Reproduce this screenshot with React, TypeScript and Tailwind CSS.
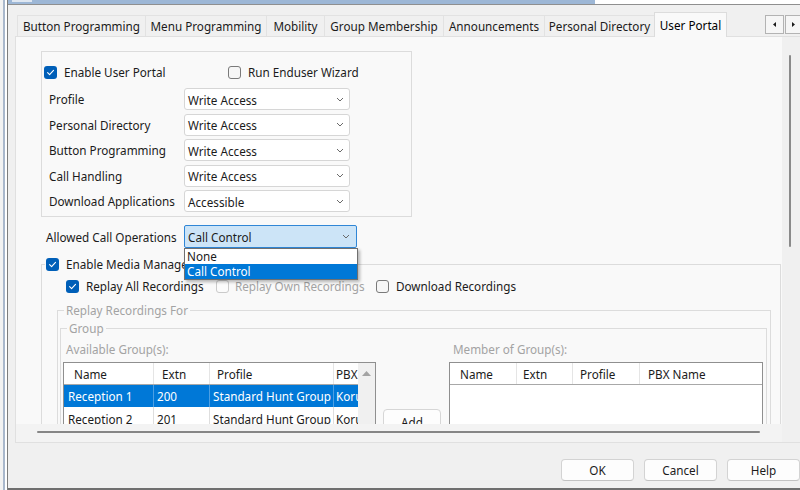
import React from "react";

function Check() {
  return (
    <svg width="9" height="9" viewBox="0 0 9 9">
      <path d="M1.6 4.7 L3.6 6.7 L7.5 2.3" fill="none" stroke="white" strokeWidth="1.1" strokeLinecap="round" strokeLinejoin="round" />
    </svg>
  );
}

function Checkbox({ checked, disabled }: { checked?: boolean; disabled?: boolean }) {
  if (checked)
    return (
      <div className="w-[13px] h-[13px] rounded-[3px] bg-[#005fb8] flex items-center justify-center shrink-0">
        <Check />
      </div>
    );
  return (
    <div
      className={
        disabled
          ? "w-[13px] h-[13px] rounded-[3px] border border-[#cacaca] bg-[#fbfbfb] shrink-0"
          : "w-[13px] h-[13px] rounded-[3px] border border-[#7a7a7a] bg-[#f6f6f6] shrink-0"
      }
    />
  );
}

function Chevron() {
  return (
    <svg width="8" height="5" viewBox="0 0 8 5">
      <path d="M1 1 L4 4 L7 1" fill="none" stroke="#6a6a6a" strokeWidth="1" />
    </svg>
  );
}

function Select({ value }: { value: string }) {
  return (
    <div className="h-[22px] w-[166px] border border-[#d6d6d6] rounded-[3px] bg-white flex items-center pl-[3px] pr-[5px]">
      <span className="flex-1 pt-[1px]">{value}</span>
      <Chevron />
    </div>
  );
}

const tabs: [string, string][] = [
  ["Button Programming", "w-[128px]"],
  ["Menu Programming", "w-[121px]"],
  ["Mobility", "w-[58px]"],
  ["Group Membership", "w-[119px]"],
  ["Announcements", "w-[101px]"],
  ["Personal Directory", "w-[110px]"],
];

const rows: [string, string][] = [
  ["Profile", "Write Access"],
  ["Personal Directory", "Write Access"],
  ["Button Programming", "Write Access"],
  ["Call Handling", "Write Access"],
  ["Download Applications", "Accessible"],
];

function Btn({ label }: { label: string }) {
  return (
    <div className="w-[73px] h-[22px] shrink-0 border border-[#d3d3d3] border-b-[#c2c2c2] rounded-[4px] bg-[#fdfdfd] flex items-center justify-center">
      {label}
    </div>
  );
}

export default function App() {
  return (
    <div className="w-[800px] h-[490px] flex overflow-hidden bg-[#f0f0f0] text-[11.7px] leading-[16px] text-[#1b1b1b] font-['Noto_Sans',sans-serif]">
      {/* left edge of window behind */}
      <div className="w-[8px] h-full flex shrink-0">
        <div className="w-[3px] bg-[#f2f2f2]" />
        <div className="w-[2px] bg-[#a9b8cc]" />
        <div className="w-[2px] bg-white" />
        <div className="w-[1px] bg-[#7d7d7d]" />
      </div>

      <div className="flex-1 flex flex-col min-w-0">
        <div className="h-[4px] flex shrink-0">
          <div className="w-[587px] bg-[#9db7d6] pl-[4px]">
            <div className="w-[20px] h-[2px] bg-[#dfe7f1]" />
          </div>
          <div className="flex-1 bg-white" />
        </div>
        <div className="h-[1px] bg-[#8f8f8f] shrink-0" />

        <div className="flex-1 flex flex-col border-b-2 border-[#6f6f6f] min-h-0">
          {/* tab strip */}
          <div className="mt-[7px] ml-[9px] h-[24px] flex items-end shrink-0">
            {tabs.map(([t, w]) => (
              <div
                key={t}
                className={`${w} h-[21px] shrink-0 border-t border-l border-[#e2e2e2] flex items-center justify-center whitespace-nowrap`}
              >
                {t}
              </div>
            ))}
            <div className="w-[73px] h-[25px] shrink-0 bg-[#f9f9f9] border-t border-l border-r border-[#dcdcdc] mb-[-1px] relative z-10 flex items-center justify-center whitespace-nowrap text-black pb-[1px]">
              User Portal
            </div>
            <div className="ml-auto mr-[-4px] self-start mt-[3px] flex gap-[1px]">
              <div className="w-[19px] h-[19px] border border-[#b3b3b3] bg-[#f6f6f6] flex items-center justify-center">
                <svg width="3" height="5" viewBox="0 0 3 5">
                  <path d="M3 0 L0 2.5 L3 5 Z" fill="#1b1b1b" />
                </svg>
              </div>
              <div className="w-[19px] h-[19px] border border-[#b3b3b3] bg-[#f6f6f6] flex items-center justify-center pr-[3px]">
                <svg width="3" height="5" viewBox="0 0 3 5">
                  <path d="M0 0 L3 2.5 L0 5 Z" fill="#1b1b1b" />
                </svg>
              </div>
            </div>
          </div>

          {/* tab panel */}
          <div className="ml-[7px] h-[407px] flex border-t border-l border-b border-[#e0e0e0] bg-[#f9f9f9] shrink-0">
            <div className="w-[766px] flex flex-col">
              <div className="h-[387px] overflow-hidden">
                <div className="pl-[25px] pt-[14px] flex flex-col items-start">
                  {/* group 1 */}
                  <div className="w-[371px] h-[166px] border border-[#dcdcdc] pt-[13px] flex flex-col">
                    <div className="flex items-center h-[14px] pl-[2px]">
                      <div className="w-[184px] flex items-center gap-[7px]">
                        <Checkbox checked />
                        <span>Enable User Portal</span>
                      </div>
                      <div className="flex items-center gap-[7px]">
                        <Checkbox />
                        <span>Run Enduser Wizard</span>
                      </div>
                    </div>
                    <div className="mt-[9px] flex flex-col gap-[3.6px]">
                      {rows.map(([l, v]) => (
                        <div key={l} className="flex items-center h-[22px] pl-[7px]">
                          <span className="w-[135px] shrink-0 whitespace-nowrap">{l}</span>
                          <Select value={v} />
                        </div>
                      ))}
                    </div>
                  </div>

                  {/* allowed call operations */}
                  <div className="mt-[8px] flex items-center pl-[5px]">
                    <span className="w-[138px] shrink-0 whitespace-nowrap">Allowed Call Operations</span>
                    <div className="relative">
                      <div className="h-[23px] w-[173px] border border-[#2f86d6] rounded-[2px] bg-[#cce4f7] flex items-center pl-[3px] pr-[6px]">
                        <span className="flex-1 pt-[1px]">Call Control</span>
                        <Chevron />
                      </div>
                      <div className="absolute left-0 top-full w-[174px] border border-[#707070] bg-white z-10 shadow-[2px_2px_3px_rgba(0,0,0,0.28)]">
                        <div className="h-[15px] leading-[15px] pl-[2px]">None</div>
                        <div className="h-[15px] leading-[15px] pl-[2px] bg-[#0078d7] text-white">Call Control</div>
                      </div>
                    </div>
                  </div>

                  {/* media manager group */}
                  <fieldset className="mt-[9px] w-[740px] h-[200px] border border-[#dcdcdc]">
                    <legend className="ml-[3px] px-[1px]">
                      <div className="flex items-center gap-[7px] h-[14px]">
                        <Checkbox checked />
                        <span>Enable Media Manager</span>
                      </div>
                    </legend>
                    <div className="mt-[8px] h-[14px] flex items-center pl-[24px]">
                      <div className="w-[150px] flex items-center gap-[7px] shrink-0">
                        <Checkbox checked />
                        <span>Replay All Recordings</span>
                      </div>
                      <div className="w-[160px] flex items-center gap-[6px] shrink-0 text-[#a3a3a3]">
                        <Checkbox disabled />
                        <span>Replay Own Recordings</span>
                      </div>
                      <div className="flex items-center gap-[7px]">
                        <Checkbox />
                        <span>Download Recordings</span>
                      </div>
                    </div>

                    <fieldset className="mt-[9px] ml-[15px] w-[714px] h-[150px] border border-[#dcdcdc]">
                      <legend className="ml-[6px] px-[2px] text-[#a3a3a3]">Replay Recordings For</legend>
                      <fieldset className="mt-[2px] ml-[2px] w-[707px] h-[120px] border border-[#dcdcdc]">
                        <legend className="ml-[6px] px-[2px] text-[#a3a3a3]">Group</legend>
                        <div className="mt-[5px] flex items-start">
                          {/* available */}
                          <div className="flex flex-col">
                            <div className="pl-[5px] h-[16px] text-[#a3a3a3]">Available Group(s):</div>
                            <div className="ml-[2px] mt-[5px] w-[313px] h-[80px] border border-[#8f8f8f] bg-white flex">
                              <div className="flex-1 flex flex-col overflow-hidden">
                                <div className="h-[22px] flex border-b border-[#a8a8a8] shrink-0 whitespace-nowrap">
                                  <div className="w-[90px] shrink-0 pl-[10px] border-r border-[#e5e5e5] flex items-center">Name</div>
                                  <div className="w-[56px] shrink-0 pl-[8px] border-r border-[#e5e5e5] flex items-center">Extn</div>
                                  <div className="w-[124px] shrink-0 pl-[7px] border-r border-[#e5e5e5] flex items-center">Profile</div>
                                  <div className="flex-1 pl-[2px] flex items-center overflow-hidden">PBX Name</div>
                                </div>
                                <div className="h-[22px] flex bg-[#0078d7] text-white shrink-0 whitespace-nowrap">
                                  <div className="w-[90px] shrink-0 pl-[4px] border-r border-[#4d9fe3] flex items-center">Reception 1</div>
                                  <div className="w-[56px] shrink-0 pl-[3px] border-r border-[#4d9fe3] flex items-center">200</div>
                                  <div className="w-[124px] shrink-0 pl-[3px] border-r border-[#4d9fe3] flex items-center overflow-hidden">Standard Hunt Group</div>
                                  <div className="flex-1 pl-[2px] flex items-center overflow-hidden">Koruna</div>
                                </div>
                                <div className="h-[22px] flex shrink-0 whitespace-nowrap">
                                  <div className="w-[90px] shrink-0 pl-[4px] border-r border-[#dedede] flex items-center pt-[2px]">Reception 2</div>
                                  <div className="w-[56px] shrink-0 pl-[3px] border-r border-[#dedede] flex items-center pt-[2px]">201</div>
                                  <div className="w-[124px] shrink-0 pl-[3px] border-r border-[#dedede] flex items-center pt-[2px] overflow-hidden">Standard Hunt Group</div>
                                  <div className="flex-1 pl-[2px] flex items-center overflow-hidden pt-[2px]">Koruna</div>
                                </div>
                              </div>
                              <div className="w-[17px] bg-[#f0f0f0] flex justify-center pt-[8px]">
                                <svg width="9" height="5" viewBox="0 0 9 5">
                                  <path d="M0 5 L4.5 0 L9 5 Z" fill="#a3a3a3" />
                                </svg>
                              </div>
                            </div>
                          </div>

                          <div className="ml-[7px] mt-[68px] w-[58px] h-[23px] border border-[#d6d6d6] rounded-[4px] bg-[#fdfdfd] flex items-center justify-center pt-[2px]">
                            Add
                          </div>

                          {/* member of */}
                          <div className="ml-[8px] flex flex-col">
                            <div className="pl-[4px] h-[16px] text-[#a3a3a3]">Member of Group(s):</div>
                            <div className="mt-[5px] w-[314px] h-[80px] border border-[#8f8f8f] bg-white flex flex-col">
                              <div className="h-[22px] flex border-b border-[#a8a8a8] shrink-0 whitespace-nowrap">
                                <div className="w-[67px] shrink-0 pl-[10px] border-r border-[#e5e5e5] flex items-center">Name</div>
                                <div className="w-[56px] shrink-0 pl-[6px] border-r border-[#e5e5e5] flex items-center">Extn</div>
                                <div className="w-[67px] shrink-0 pl-[7px] border-r border-[#e5e5e5] flex items-center">Profile</div>
                                <div className="flex-1 pl-[8px] flex items-center">PBX Name</div>
                              </div>
                            </div>
                          </div>
                        </div>
                      </fieldset>
                    </fieldset>
                  </fieldset>
                </div>
              </div>
              <div className="h-[18px] bg-[#f3f3f3] pt-[7px] pl-[21px] shrink-0">
                <div className="w-[723px] h-[2px] rounded-full bg-[#868686]" />
              </div>
            </div>
            <div className="flex-1 bg-[#f0f0f0] pt-[18px] pl-[7px]">
              <div className="w-[2px] h-[192px] rounded-full bg-[#8a8a8a]" />
            </div>
          </div>

          {/* buttons */}
          <div className="mt-[16px] flex justify-end gap-[10px]">
            <Btn label="OK" />
            <Btn label="Cancel" />
            <Btn label="Help" />
          </div>
        </div>
      </div>
    </div>
  );
}
